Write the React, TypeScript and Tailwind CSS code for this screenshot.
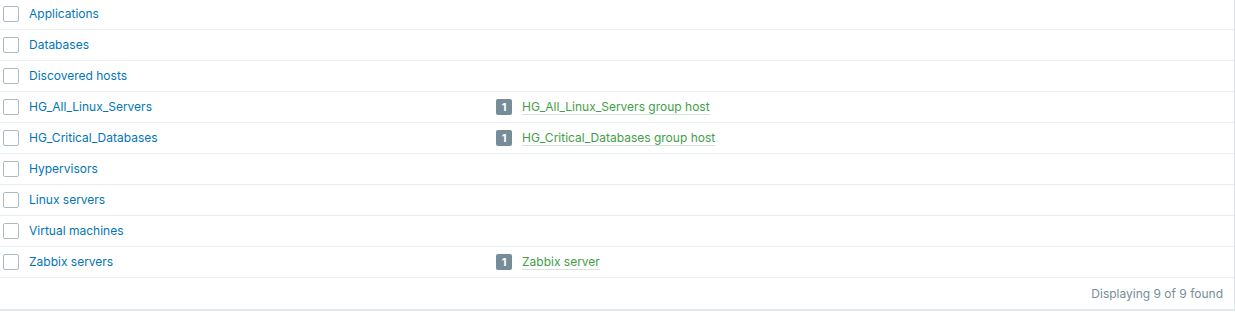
const groups: { name: string; host?: string }[] = [
  { name: "Applications" },
  { name: "Databases" },
  { name: "Discovered hosts" },
  { name: "HG_All_Linux_Servers", host: "HG_All_Linux_Servers group host" },
  { name: "HG_Critical_Databases", host: "HG_Critical_Databases group host" },
  { name: "Hypervisors" },
  { name: "Linux servers" },
  { name: "Virtual machines" },
  { name: "Zabbix servers", host: "Zabbix server" },
];

export default function App() {
  return (
    <div className="w-[1235px] h-[312px] bg-white font-['Inter',sans-serif] text-[12px] overflow-hidden">
      <div className="-mt-px border-r border-r-[#dfe4e7] border-b-2 border-b-[#e5e8ea]">
        {groups.map((g) => (
          <div
            key={g.name}
            className="flex items-center h-[31px] border-b border-[#ebeef0]"
          >
            <div className="w-[496px] flex items-center pl-[3px]">
              <span className="w-4 h-4 rounded-[2px] border border-[#acbbc2] bg-white" />
              <a className="ml-[10px] text-[#0275b8] cursor-pointer">{g.name}</a>
            </div>
            {g.host && (
              <div className="flex items-center">
                <span className="w-4 h-4 rounded-[2px] bg-[#768d99] text-white text-[11px] font-bold flex items-center justify-center leading-none">
                  1
                </span>
                <a className="ml-[10px] text-[#429e47] border-b border-[#d7e2d8] leading-[15px] cursor-pointer">
                  {g.host}
                </a>
              </div>
            )}
          </div>
        ))}
        <div className="h-[31px] flex items-center justify-end pr-[11px] text-[#768d99]">
          Displaying 9 of 9 found
        </div>
      </div>
    </div>
  );
}
